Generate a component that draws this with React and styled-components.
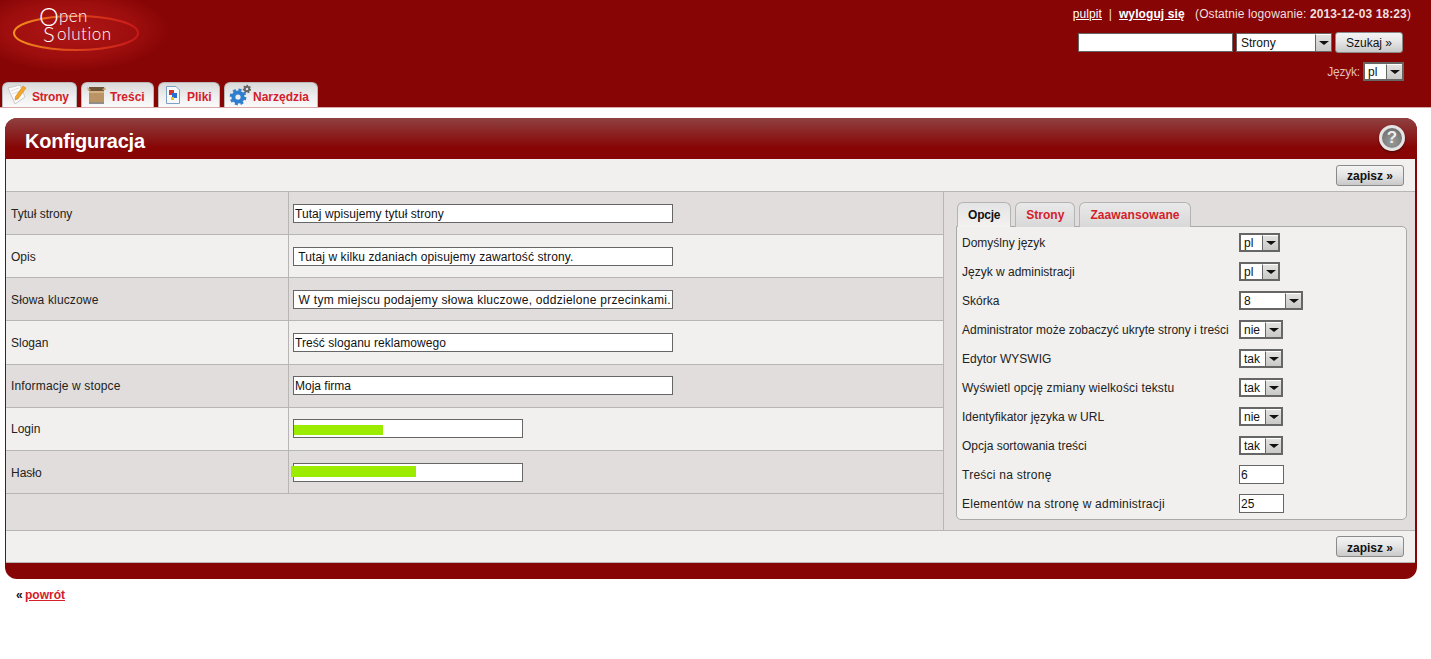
import styled, { createGlobalStyle } from "styled-components";

const GlobalStyle = createGlobalStyle`
  html, body {
    margin: 0;
    padding: 0;
    background: #fff;
    font-family: "Liberation Sans", Arial, sans-serif;
    font-size: 12px;
    color: #111;
  }
  * { box-sizing: border-box; }
`;

const Header = styled.header`
  height: 108px;
  background: #870505;
  border-bottom: 1px solid #d9a9a9;
  display: flex;
  flex-direction: column;
  justify-content: space-between;
`;

const TopRow = styled.div`
  display: flex;
  justify-content: space-between;
`;

const LogoBox = styled.div`
  width: 170px;
  height: 72px;
`;

const UserBox = styled.div`
  display: flex;
  flex-direction: column;
  align-items: flex-end;
  padding: 7px 20px 0 0;
  color: #f1dede;
`;

const UserLine = styled.div`
  height: 14px;
  line-height: 14px;
  white-space: pre;
  letter-spacing: 0.1px;
  margin-bottom: 11px;
`;

const TopLink = styled.a`
  color: #fff;
  text-decoration: underline;
  font-weight: ${(p) => (p.$bold ? "bold" : "normal")};
`;

const SearchRow = styled.div`
  display: flex;
  align-items: center;
  gap: 3px;
  margin-right: 8px;
`;

const LangRow = styled.div`
  display: flex;
  align-items: center;
  gap: 3px;
  margin: 9px 7px 0 0;
  color: #e3bcbc;
  letter-spacing: -0.2px;
`;

const Field = styled.input`
  display: block;
  width: ${(p) => p.$w}px;
  height: 19px;
  margin: 0;
  padding: 1px 1px 0;
  border: 1px solid #666;
  background: #fff;
  font: 12px "Liberation Sans", Arial, sans-serif;
  letter-spacing: ${(p) => p.$track || 0}px;
  color: #111;
  outline: none;
`;

const Drop = styled.div`
  width: ${(p) => p.$w}px;
  height: 19px;
  display: flex;
  align-items: stretch;
  background: #fff;
  border: ${(p) => (p.$thin ? 1 : 2)}px solid #666;
  color: #111;
  letter-spacing: 0;
`;

const DropValue = styled.span`
  flex: 1;
  padding-left: ${(p) => (p.$thin ? 4 : 3)}px;
  line-height: ${(p) => (p.$thin ? 18 : 16)}px;
`;

const DropArrow = styled.span`
  width: 16px;
  background: linear-gradient(#e2e2e0, #c9c9c7);
  border-left: 1px solid #666;
  border-top: 1px solid #fff;
  display: flex;
  align-items: center;
  justify-content: center;
  &::after {
    content: "";
    border-style: solid;
    border-width: 4px 5px 0 5px;
    border-color: #111 transparent transparent transparent;
  }
`;

const Select = ({ value, w, thin }) => (
  <Drop $w={w} $thin={thin}>
    <DropValue $thin={thin}>{value}</DropValue>
    <DropArrow />
  </Drop>
);

const Button = styled.button`
  height: 21px;
  width: 68px;
  padding: ${(p) => (p.$bold ? "2px 0 0" : "0")};
  border: 1px solid #8a8a8a;
  border-radius: 3px;
  background: linear-gradient(#f4f4f4, #e6e6e6 45%, #c9c9c9);
  font: ${(p) => (p.$bold ? "bold" : "normal")} 12px "Liberation Sans", Arial, sans-serif;
  color: #111;
`;

const TabBar = styled.nav`
  display: flex;
  gap: 4px;
  padding-left: 2px;
`;

const MainTab = styled.a`
  width: ${(p) => p.$w}px;
  height: 25px;
  display: flex;
  align-items: center;
  gap: 2px;
  padding: 0 0 0 4px;
  border: 1px solid #b9b9b9;
  border-bottom: none;
  border-radius: 6px 6px 0 0;
  background: linear-gradient(#d9d9d9, #f0f0f0 60%, #fafafa);
  color: #d3202a;
  font-weight: bold;
  text-decoration: none;
`;

const TabText = styled.span`
  padding: 3px 0 0 ${(p) => p.$lead || 0}px;
  letter-spacing: ${(p) => p.$track || 0}px;
`;

const TabIcon = styled.svg`
  width: 22px;
  height: 22px;
  flex: none;
`;

const Panel = styled.section`
  margin: 10px 14px 0 5px;
  background: #870505;
  border-radius: 12px;
  padding: 0 2px 16px 1px;
`;

const PanelHead = styled.div`
  height: 41px;
  margin: 0 -2px 0 -1px;
  padding: 0 12px 0 20px;
  display: flex;
  align-items: center;
  justify-content: space-between;
  border-radius: 12px 12px 0 0;
  background: linear-gradient(#8f4141, #870505 72%);
`;

const PanelTitle = styled.h1`
  margin: 6px 0 0;
  font-size: 20px;
  font-weight: bold;
  letter-spacing: -0.2px;
  color: #fff;
`;

const HelpIcon = styled.span`
  width: 26px;
  height: 26px;
  border-radius: 50%;
  margin-bottom: 2px;
  border: 3px solid #e4e4e4;
  background: radial-gradient(circle at 50% 70%, #9a9a9a, #666);
  box-shadow: 0 1px 2px rgba(0, 0, 0, 0.5);
  color: #eee;
  font-size: 17px;
  font-weight: bold;
  line-height: 20px;
  text-align: center;
`;

const Toolbar = styled.div`
  height: ${(p) => (p.$bottom ? 33 : 32)}px;
  display: flex;
  align-items: center;
  justify-content: flex-end;
  padding-right: 11px;
  background: #f1f0ee;
  border-top: ${(p) => (p.$bottom ? "1px solid #b8b6b4" : "none")};
  border-bottom: ${(p) => (p.$bottom ? "1px solid #b8b6b4" : "none")};
`;

const Body = styled.div`
  display: flex;
  height: 339px;
  background: #e0dddc;
  border-top: 1px solid #b8b6b4;
`;

const FormCol = styled.div`
  width: 938px;
  border-right: 1px solid #b8b6b4;
`;

const FormRow = styled.div`
  height: ${(p) => (p.$tall ? 44 : 43)}px;
  display: flex;
  background: ${(p) => (p.$light ? "#f1f0ee" : "#e0dddc")};
  border-bottom: 1px solid #b8b6b4;
`;

const RowLabel = styled.div`
  width: 283px;
  padding: ${(p) => p.$pad}px 0 0 5px;
  line-height: 21px;
  letter-spacing: ${(p) => p.$track || 0}px;
  border-right: 1px solid #b8b6b4;
  color: #222;
`;

const RowValue = styled.div`
  flex: 1;
  padding: ${(p) => p.$pad}px 0 0 4px;
`;

const MaskedWrap = styled.div`
  position: relative;
  width: 230px;
`;

const Mask = styled.span`
  position: absolute;
  left: ${(p) => p.$left}px;
  top: ${(p) => p.$top}px;
  width: ${(p) => p.$w}px;
  height: ${(p) => p.$h}px;
  background: #9bec00;
`;

const SideCol = styled.aside`
  flex: 1;
  padding: 10px 8px 0 12px;
`;

const SideTabs = styled.div`
  display: flex;
  gap: 4px;
  padding-left: 1px;
`;

const SideTab = styled.a`
  height: 25px;
  padding: 0 10px;
  display: flex;
  align-items: center;
  border: 1px solid #b4b4b4;
  border-bottom: none;
  border-radius: 6px 6px 0 0;
  background: ${(p) => (p.$active ? "linear-gradient(#e4e4e4, #f3f2f0)" : "linear-gradient(#e9e9e9, #d9d8d8)")};
  color: ${(p) => (p.$active ? "#111" : "#d3202a")};
  font-weight: bold;
  letter-spacing: ${(p) => p.$track || 0}px;
  text-decoration: none;
  margin-bottom: -1px;
  position: relative;
`;

const OptionBox = styled.div`
  height: 294px;
  padding: 1px 0 0 5px;
  background: #f1f0ee;
  border: 1px solid #a9a9a9;
  border-radius: 0 5px 5px 5px;
`;

const OptionRow = styled.div`
  height: 29px;
  display: flex;
  align-items: center;
`;

const OptionLabel = styled.div`
  width: 277px;
  letter-spacing: ${(p) => p.$track || 0}px;
  color: #222;
`;

const BackRow = styled.div`
  margin: 9px 0 0 16px;
  font-weight: bold;
  word-spacing: -1px;
`;

const BackLink = styled.a`
  color: #d3202a;
  text-decoration: underline;
`;

const NoteIcon = () => (
  <TabIcon viewBox="0 0 22 22">
    <path d="M1 4 L13 1 L18 13 L8 20 Z" fill="#fdfdfd" stroke="#c9c9c9" />
    <path d="M4 7 L12 4 M5 10 L13 7" stroke="#dcdcdc" />
    <path d="M16 2 L19 4 L11 15 L8 16 L8.5 12.5 Z" fill="#f3a72a" stroke="#c87f14" strokeWidth="0.5" />
  </TabIcon>
);

const BoxIcon = () => (
  <TabIcon viewBox="0 0 22 22">
    <rect x="3" y="3" width="15" height="4" fill="#6f5638" />
    <path d="M1 3 L5 6 L2 7 Z M19 3 L16 6 L20 6 Z" fill="#c8a878" />
    <rect x="3" y="7" width="15" height="11" fill="#bb9465" />
    <rect x="3" y="7" width="15" height="2" fill="#d4b083" />
    <rect x="3" y="18" width="15" height="2" fill="#8f8d88" />
  </TabIcon>
);

const FileIcon = () => (
  <TabIcon viewBox="0 0 22 22">
    <path d="M3.5 2.5 H13 L16.5 6 V19.5 H3.5 Z" fill="#f7fafd" stroke="#7f9fc4" />
    <rect x="6" y="6" width="5" height="5" fill="#d9342b" />
    <rect x="9" y="9" width="5" height="5" fill="#2a6fd6" />
    <rect x="8" y="13" width="3" height="3" fill="#f0c419" />
  </TabIcon>
);

const GearIcon = () => (
  <TabIcon viewBox="0 0 22 22">
    <circle cx="9" cy="13" r="4.6" fill="none" stroke="#2f7fd0" strokeWidth="4" />
    <circle cx="9" cy="13" r="7.2" fill="none" stroke="#2f7fd0" strokeWidth="2.4" strokeDasharray="3 2.7" />
    <circle cx="18" cy="5" r="2.2" fill="none" stroke="#666" strokeWidth="2" />
    <circle cx="18" cy="5" r="3.6" fill="none" stroke="#666" strokeWidth="1.4" strokeDasharray="1.6 1.6" />
  </TabIcon>
);

const logoText = { fill: "#fff", fontFamily: "Lato, sans-serif", fontWeight: 300 };

const Logo = () => (
  <svg width="170" height="72" viewBox="0 0 170 72">
    <defs>
      <radialGradient id="glow">
        <stop offset="0%" stopColor="#b01616" />
        <stop offset="65%" stopColor="#9e0e0e" />
        <stop offset="100%" stopColor="#870505" />
      </radialGradient>
      <linearGradient id="ring" x1="0" x2="1">
        <stop offset="0%" stopColor="#f2901e" />
        <stop offset="45%" stopColor="#e0481c" />
        <stop offset="100%" stopColor="#c81818" />
      </linearGradient>
    </defs>
    <ellipse cx="70" cy="30" rx="100" ry="42" fill="url(#glow)" />
    <ellipse cx="76" cy="33" rx="62" ry="17" fill="none" stroke="url(#ring)" strokeWidth="2" />
    <text x="39" y="26" fontSize="25" {...logoText}>O</text>
    <text x="59" y="22" fontSize="17" letterSpacing="0.4" {...logoText}>pen</text>
    <text x="43" y="42" fontSize="22" {...logoText}>S</text>
    <text x="57" y="40" fontSize="17" letterSpacing="0.5" {...logoText}>olution</text>
  </svg>
);

const formRows = [
  { label: "Tytuł strony", value: "Tutaj wpisujemy tytuł strony", track: 0.07, pad: 12 },
  { label: "Opis", value: " Tutaj w kilku zdaniach opisujemy zawartość strony.", track: 0.1, pad: 12 },
  { label: "Słowa kluczowe", labelTrack: 0.15, value: " W tym miejscu podajemy słowa kluczowe, oddzielone przecinkami.", track: 0.27, pad: 12 },
  { label: "Slogan", value: "Treść sloganu reklamowego", track: 0.05, pad: 12, tall: true },
  { label: "Informacje w stopce", labelTrack: 0.15, value: "Moja firma", pad: 11 },
];

const options = [
  { label: "Domyślny język", value: "pl", w: 41 },
  { label: "Język w administracji", value: "pl", w: 41 },
  { label: "Skórka", value: "8", w: 64 },
  { label: "Administrator może zobaczyć ukryte strony i treści", value: "nie", w: 44 },
  { label: "Edytor WYSWIG", value: "tak", w: 44 },
  { label: "Wyświetl opcję zmiany wielkości tekstu", value: "tak", w: 44, track: 0.13 },
  { label: "Identyfikator języka w URL", value: "nie", w: 44 },
  { label: "Opcja sortowania treści", value: "tak", w: 44 },
  { label: "Treści na stronę", value: "6", w: 45, input: true, track: 0.25 },
  { label: "Elementów na stronę w administracji", value: "25", w: 45, input: true, track: 0.23 },
];

export default function App() {
  return (
    <>
      <GlobalStyle />
      <Header>
        <TopRow>
          <LogoBox>
            <Logo />
          </LogoBox>
          <UserBox>
            <UserLine>
              <TopLink href="#">pulpit</TopLink>
              {"  |  "}
              <TopLink href="#" $bold>wyloguj się</TopLink>
              {"   (Ostatnie logowanie: "}
              <b>2013-12-03 18:23</b>)
            </UserLine>
            <SearchRow>
              <Field $w={155} readOnly />
              <Select value="Strony" w={96} thin />
              <Button>Szukaj »</Button>
            </SearchRow>
            <LangRow>
              Język:
              <Select value="pl" w={41} />
            </LangRow>
          </UserBox>
        </TopRow>
        <TabBar>
          <MainTab href="#" $w={75}><NoteIcon /><TabText $lead={1} $track={-0.2}>Strony</TabText></MainTab>
          <MainTab href="#" $w={73}><BoxIcon /><TabText>Treści</TabText></MainTab>
          <MainTab href="#" $w={62}><FileIcon /><TabText>Pliki</TabText></MainTab>
          <MainTab href="#" $w={94}><GearIcon /><TabText>Narzędzia</TabText></MainTab>
        </TabBar>
      </Header>

      <Panel>
        <PanelHead>
          <PanelTitle>Konfiguracja</PanelTitle>
          <HelpIcon>?</HelpIcon>
        </PanelHead>
        <Toolbar>
          <Button $bold>zapisz »</Button>
        </Toolbar>
        <Body>
          <FormCol>
            {formRows.map((row, i) => (
              <FormRow key={row.label} $light={i % 2 === 1} $tall={row.tall}>
                <RowLabel $pad={row.pad} $track={row.labelTrack}>{row.label}</RowLabel>
                <RowValue $pad={row.pad}>
                  <Field $w={380} $track={row.track} defaultValue={row.value} readOnly />
                </RowValue>
              </FormRow>
            ))}
            <FormRow $light>
              <RowLabel $pad={11}>Login</RowLabel>
              <RowValue $pad={11}>
                <MaskedWrap>
                  <Field $w={230} readOnly />
                  <Mask $left={1} $top={6} $w={89} $h={10} />
                </MaskedWrap>
              </RowValue>
            </FormRow>
            <FormRow>
              <RowLabel $pad={12}>Hasło</RowLabel>
              <RowValue $pad={12}>
                <MaskedWrap>
                  <Field $w={230} readOnly />
                  <Mask $left={-2} $top={3} $w={125} $h={11} />
                </MaskedWrap>
              </RowValue>
            </FormRow>
          </FormCol>
          <SideCol>
            <SideTabs>
              <SideTab href="#" $active $track={-0.2}>Opcje</SideTab>
              <SideTab href="#">Strony</SideTab>
              <SideTab href="#" $track={0.1}>Zaawansowane</SideTab>
            </SideTabs>
            <OptionBox>
              {options.map((opt) => (
                <OptionRow key={opt.label}>
                  <OptionLabel $track={opt.track}>{opt.label}</OptionLabel>
                  {opt.input ? (
                    <Field $w={opt.w} defaultValue={opt.value} readOnly />
                  ) : (
                    <Select value={opt.value} w={opt.w} />
                  )}
                </OptionRow>
              ))}
            </OptionBox>
          </SideCol>
        </Body>
        <Toolbar $bottom>
          <Button $bold>zapisz »</Button>
        </Toolbar>
      </Panel>

      <BackRow>
        « <BackLink href="#">powrót</BackLink>
      </BackRow>
    </>
  );
}
